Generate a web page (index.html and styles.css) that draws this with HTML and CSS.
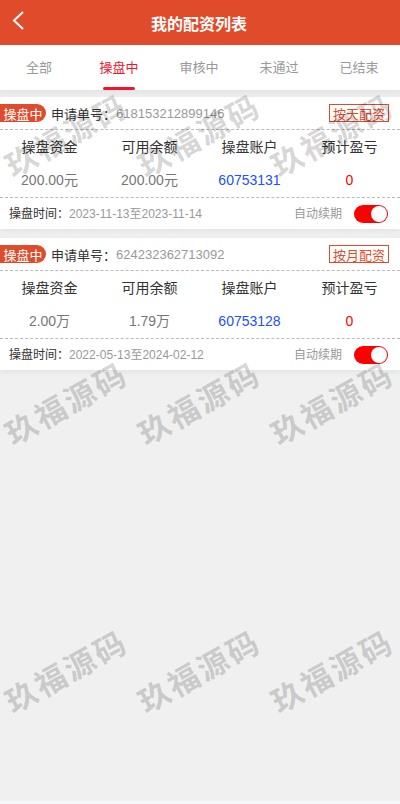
FILE: index.html
```html
<!DOCTYPE html>
<html lang="zh-CN">
<head>
<meta charset="utf-8">
<title>我的配资列表</title>
<link rel="stylesheet" href="styles.css">
</head>
<body>
<div class="page">
  <header class="topbar">
    <svg class="back" width="14" height="20" viewBox="0 0 14 20"><path d="M12 2 L3 10.5 L12 19" fill="none" stroke="#fff" stroke-width="2"/></svg>
    <h1 class="title">我的配资列表</h1>
  </header>
  <nav class="tabs">
    <div class="tab">全部</div>
    <div class="tab active">操盘中</div>
    <div class="tab">审核中</div>
    <div class="tab">未通过</div>
    <div class="tab">已结束</div>
  </nav>
  <main class="list">
    <section class="card">
      <div class="head">
        <span class="status">操盘中</span>
        <span class="label">申请单号：</span>
        <span class="orderno">618153212899146</span>
        <span class="type">按天配资</span>
      </div>
      <div class="stats">
        <div class="cell"><span class="k">操盘资金</span><span class="v">200.00元</span></div>
        <div class="cell"><span class="k">可用余额</span><span class="v">200.00元</span></div>
        <div class="cell"><span class="k">操盘账户</span><span class="v blue">60753131</span></div>
        <div class="cell"><span class="k">预计盈亏</span><span class="v red">0</span></div>
      </div>
      <div class="foot">
        <span class="tlabel">操盘时间：</span>
        <span class="tval">2023-11-13至2023-11-14</span>
        <span class="auto">自动续期</span>
        <span class="switch"><i class="knob"></i></span>
      </div>
    </section>
    <section class="card">
      <div class="head">
        <span class="status">操盘中</span>
        <span class="label">申请单号：</span>
        <span class="orderno">624232362713092</span>
        <span class="type">按月配资</span>
      </div>
      <div class="stats">
        <div class="cell"><span class="k">操盘资金</span><span class="v">2.00万</span></div>
        <div class="cell"><span class="k">可用余额</span><span class="v">1.79万</span></div>
        <div class="cell"><span class="k">操盘账户</span><span class="v blue">60753128</span></div>
        <div class="cell"><span class="k">预计盈亏</span><span class="v red">0</span></div>
      </div>
      <div class="foot">
        <span class="tlabel">操盘时间：</span>
        <span class="tval">2022-05-13至2024-02-12</span>
        <span class="auto">自动续期</span>
        <span class="switch"><i class="knob"></i></span>
      </div>
    </section>
  </main>
  <div class="marks">
    <span class="mark">玖福源码</span><span class="mark">玖福源码</span><span class="mark">玖福源码</span>
    <span class="mark">玖福源码</span><span class="mark">玖福源码</span><span class="mark">玖福源码</span>
    <span class="mark">玖福源码</span><span class="mark">玖福源码</span><span class="mark">玖福源码</span>
  </div>
</div>
</body>
</html>
```
FILE: styles.css
```css
* { box-sizing: border-box; }
html, body { margin: 0; padding: 0; }
body {
  width: 400px;
  height: 804px;
  overflow: hidden;
  background: #f5f6f7;
  font-family: "Liberation Sans", "Noto Sans CJK SC", sans-serif;
}
.page { position: relative; width: 400px; height: 801px; background: #f0f0f0; }
.topbar {
  height: 45px;
  background: #e04b2b;
  display: flex;
  align-items: center;
  justify-content: center;
  padding-right: 2px;
  position: relative;
}
.back { position: absolute; left: 11px; top: 10px; }
.title { margin: 0; color: #fff; font-size: 16px; font-weight: 700; }
.tabs { height: 45px; background: #fff; display: flex; }
.tab {
  flex: 1;
  display: flex;
  align-items: center;
  justify-content: center;
  padding: 0 2px 2px 0;
  font-size: 13px;
  color: #999;
  position: relative;
}
.tab.active { color: #f0142d; }
.tab.active::after {
  content: "";
  position: absolute;
  left: 23px;
  bottom: 0;
  width: 32px;
  height: 3px;
  border-radius: 2px;
  background: #f0142d;
}
.list {
  padding-top: 7px;
  display: flex;
  flex-direction: column;
  gap: 9px;
  background: linear-gradient(#e4e4e4, #f0f0f0 7px) no-repeat;
}
.card { background: #fff; height: 132px; box-shadow: 0 2px 6px rgba(0,0,0,.06); }
.head {
  height: 33px;
  display: flex;
  align-items: center;
  border-bottom: 1px dashed #bbb;
  font-size: 13px;
}
.status {
  width: 46px;
  height: 18px;
  background: #e04b2b;
  color: #fff;
  border-radius: 0 9px 9px 0;
  display: flex;
  align-items: center;
  justify-content: center;
  font-size: 13px;
}
.label { color: #333; margin-left: 5px; }
.orderno { color: #999; flex: 1; }
.type {
  width: 60px;
  height: 18px;
  margin-right: 11px;
  border: 1px solid #e04b2b;
  color: #e04b2b;
  display: flex;
  align-items: center;
  justify-content: center;
  font-size: 13px;
}
.stats {
  height: 68px;
  display: grid;
  grid-template-columns: repeat(4, 100px);
  border-bottom: 1px dashed #bbb;
}
.cell { display: flex; flex-direction: column; align-items: center; padding: 8px 1px 0 0; gap: 15px; font-size: 14px; }
.k { color: #333; line-height: 18px; }
.v { color: #777; line-height: 18px; }
.blue { color: #2050ff; }
.red { color: #f00; }
.foot { height: 31px; display: flex; align-items: center; padding: 0 12px 2px 9px; font-size: 12px; }
.tlabel { color: #333; }
.tval { color: #999; flex: 1; }
.auto { color: #999; margin-right: 12px; }
.switch {
  width: 34px;
  height: 18px;
  margin-top: 2px;
  border-radius: 9px;
  background: #f00;
  position: relative;
  display: block;
}
.knob {
  position: absolute;
  right: 1px;
  top: 1px;
  width: 16px;
  height: 16px;
  border-radius: 50%;
  background: #fff;
}
.marks {
  position: absolute;
  left: 0;
  top: 3px;
  width: 400px;
  display: grid;
  grid-template-columns: repeat(3, minmax(0, 1fr));
  grid-auto-rows: 268px;
  pointer-events: none;
}
.mark {
  justify-self: center;
  align-self: center;
  transform: rotate(-29deg);
  font-size: 31px;
  line-height: 28px;
  letter-spacing: 2.5px;
  font-weight: 700;
  white-space: nowrap;
  color: rgba(0,0,0,.17);
}
```
